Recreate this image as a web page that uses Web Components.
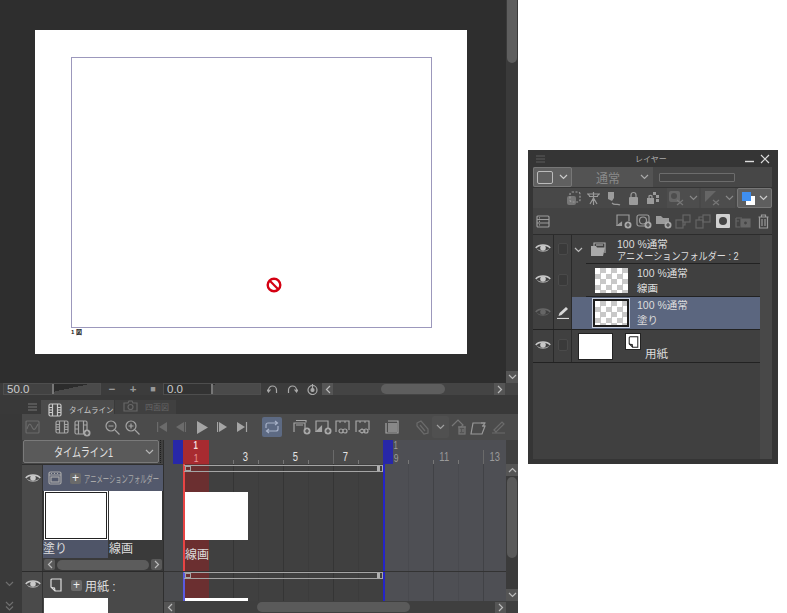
<!DOCTYPE html>
<html lang="ja">
<head>
<meta charset="utf-8">
<title>Timeline</title>
<style>
  html, body { margin: 0; padding: 0; background: #fff; width: 787px; height: 613px; overflow: hidden; }
  body { display: flex; align-items: flex-start; font-family: "Liberation Sans", "Noto Sans CJK JP", sans-serif; }
  app-left { flex: none; }
  layer-panel { flex: none; margin: 150px 0 0 10px; }
</style>
</head>
<body>
<app-left>
  <canvas-view></canvas-view>
  <status-bar></status-bar>
  <timeline-panel></timeline-panel>
</app-left>
<layer-panel></layer-panel>

<script>
const SVG = (w, h, body) => `<svg width="${w}" height="${h}" viewBox="0 0 ${w} ${h}" fill="none" stroke="currentColor" stroke-width="1.2">${body}</svg>`;
const PLUS = (x, y, c) => `<circle cx="${x}" cy="${y}" r="3.5" fill="#a8a8a8" stroke="none"/><path d="M${x-2} ${y}h4M${x} ${y-2}v4" stroke="${c || '#444'}"/>`;

const ICON = {
  burger: SVG(9, 8, '<path d="M0 1h9M0 4h9M0 7h9" stroke-width="1"/>'),
  film: SVG(14, 14, '<rect x="1" y="1" width="12" height="12" rx="1.5"/><path d="M4.5 1v12M9.5 1v12M1 4.500h3.500M1 7h3.500M1 9.500h3.500M9.500 4.500h3.500M9.500 7h3.500M9.500 9.500h3.500"/>'),
  filmAdd: SVG(17, 17, '<rect x="1" y="1" width="12" height="13" rx="1.5"/><path d="M4.500 1v13M9.500 1v13M1 5h3.500M1 9h3.500M9.500 5h3.500"/>' + PLUS(13, 13)),
  animFolder: SVG(14, 14, '<rect x="1" y="1" width="12" height="12" rx="1.500"/><path d="M1 4h12M3 2.500h1M6 2.500h1M9 2.500h1"/><rect x="3" y="6" width="8" height="5"/>'),
  camera: SVG(15, 12, '<path d="M1 11V3h4l1-2h3l1 2h4v8z"/><circle cx="7.500" cy="7" r="2.500"/>'),
  zoomOut: SVG(15, 15, '<circle cx="6" cy="6" r="5"/><path d="M10 10l4.500 4.500M3.500 6h5"/>'),
  zoomIn: SVG(15, 15, '<circle cx="6" cy="6" r="5"/><path d="M10 10l4.500 4.500M3.500 6h5M6 3.500v5"/>'),
  wave: SVG(15, 14, '<rect x="1" y="1" width="13" height="12" rx="1"/><path d="M2 9c2-6 3-6 5-2s3 3 6-3"/>'),
  first: SVG(11, 12, '<path d="M.6 1v10"/><path d="M10 1v10L2 6z" fill="currentColor" stroke="none"/>'),
  prev: SVG(11, 12, '<path d="M9 1v10L1 6z" fill="currentColor" stroke="none"/><path d="M10.500 1v10"/>'),
  play: SVG(11, 13, '<path d="M0 0v13l11-6.500z" fill="currentColor" stroke="none"/>'),
  next: SVG(11, 12, '<path d="M.5 1v10"/><path d="M2 1v10l8-5z" fill="currentColor" stroke="none"/>'),
  last: SVG(11, 12, '<path d="M0 1v10l8-5z" fill="currentColor" stroke="none"/><path d="M9.500 1v10"/>'),
  loop: SVG(16, 14, '<path d="M2 8V5a2 2 0 0 1 2-2h9M11 1l2.500 2L11 5M14 6v3a2 2 0 0 1-2 2H3M5 9l-2.500 2L5 13"/>'),
  undo: SVG(11, 9, '<path d="M1.500 7V5a4 4 0 0 1 8 0v3M0 4.500l1.500 2.500L3.500 4.500"/>'),
  redo: SVG(11, 9, '<path d="M1.500 8V5a4 4 0 0 1 8 0v2M7.500 4.500l2 2.500L11 4.500"/>'),
  clock: SVG(11, 11, '<circle cx="5.500" cy="6" r="4.500"/><path d="M5.500 0v6"/><circle cx="5.500" cy="6" r="1.500" fill="currentColor"/>'),
  eye: SVG(16, 10, '<path d="M.8 5C4 1 12 1 15.200 5" stroke-width="1.600"/><path d="M2.500 6.500C5 8.800 11 8.800 13.500 6.500" stroke-width=".8"/><circle cx="8" cy="5" r="2.800" fill="currentColor" stroke="none"/>'),
  chevron: SVG(9, 6, '<path d="M1 1l3.500 3.500L8 1"/>'),
  dbl: SVG(9, 10, '<path d="M1 1l3.500 3.500L8 1M1 5.500L4.500 9 8 5.500"/>'),
  left: SVG(6, 9, '<path d="M5 1L1.500 4.500 5 8"/>'),
  right: SVG(6, 9, '<path d="M1 1l3.500 3.500L1 8"/>'),
  page: SVG(12, 14, '<path d="M1 9V2a1 1 0 0 1 1-1h9v12H5z"/><path d="M1 9.500l3.500.5.500 3"/>'),
  folderFilm: SVG(17, 15, '<path d="M4 4V1h11v10"/><path d="M1 14V4h5l1 1.500h8L13 14z" fill="currentColor" stroke="none"/><path d="M6 3h7"/>'),
  pen: SVG(14, 13, '<path d="M1 12.500h12"/><path d="M2.500 10l1-3L10 1l2 2-6.500 6z" fill="currentColor" stroke="none"/>'),
};

class CanvasView extends HTMLElement {
  constructor() {
    super();
    this.attachShadow({ mode: 'open' }).innerHTML = `
    <style>
      :host { display: flex; width: 518px; height: 383px; background: #2e2e2e; }
      .stage { flex: none; width: 506px; padding: 30px 0 0 35px; box-sizing: border-box; }
      .paper { width: 432px; height: 324px; background: #fff; padding: 27px 0 0 36px; box-sizing: border-box; display: flex; flex-direction: column; }
      .frame { position: relative; width: 361px; height: 271px; box-sizing: border-box; border: 1px solid #9c98bc; }
      .ban { position: absolute; left: 194px; top: 219px; }
      .num { font: bold 6px/8px "Liberation Sans", "Noto Sans CJK JP", sans-serif; color: #222; }
      .bar { flex: none; width: 12px; background: #3a3a3a; display: flex; flex-direction: column; justify-content: space-between; }
      .thumb { height: 63px; margin: 0 1px; background: #5e5e5e; border-radius: 0 0 5px 5px; }
      .btn { height: 12px; background: #555; color: #bbb; display: flex; align-items: center; justify-content: center; }
    </style>
    <div class="stage">
      <div class="paper">
        <div class="frame">
          <svg class="ban" width="16" height="16" viewBox="0 0 16 16"><circle cx="8" cy="8" r="6.300" fill="#fff" stroke="#d40012" stroke-width="2.400"/><path d="M3.800 3.800l8.400 8.400" stroke="#d40012" stroke-width="2.200"/></svg>
        </div>
        <div class="num">1 図</div>
      </div>
    </div>
    <div class="bar"><div class="thumb"></div><div class="btn">${ICON.chevron}</div></div>`;
  }
}

class StatusBar extends HTMLElement {
  constructor() {
    super();
    this.attachShadow({ mode: 'open' }).innerHTML = `
    <style>
      :host { display: flex; align-items: center; width: 518px; height: 12px; background: #3c3c3c; color: #ccc; font: 11.5px/12px "Liberation Sans", sans-serif; }
      .field { position: relative; height: 12px; box-sizing: border-box; width: 98px; border: 1px solid #4e4e4e; padding-left: 3px; line-height: 10px; overflow: hidden;
        background: linear-gradient(90deg, #424242 48px, #777 48px 50px, transparent 50px), linear-gradient(168deg, #2c2c2c 60%, #4a4a4a 60%); }
      .field.b { background: linear-gradient(90deg, #333 47px, #777 47px 49px, transparent 49px), linear-gradient(165deg, #2c2c2c 40%, #4a4a4a 40%); }
      .sym { color: #999; width: 20px; text-align: center; font-weight: bold; }
      .ctl { color: #aaa; display: flex; width: 20px; justify-content: center; }
      .nav { flex: none; width: 11px; height: 12px; background: #555; color: #bbb; display: flex; align-items: center; justify-content: center; }
      .track { flex: 1; height: 12px; background: #444; display: flex; align-items: center; padding-left: 48px; }
      .track i { display: block; width: 64px; height: 10px; border-radius: 5px; background: #5e5e5e; }
      .end { flex: none; width: 13px; height: 12px; background: #444; }
    </style>
    <div class="field" style="margin-left:3px">50.0</div>
    <span class="sym" style="margin-left:1px">−</span><span class="sym" style="margin-left:1px">+</span>
    <span class="sym" style="font-size:9px">■</span>
    <div class="field b">0.0</div>
    <span class="ctl" style="margin-left:1px">${ICON.undo}</span><span class="ctl">${ICON.redo}</span><span class="ctl">${ICON.clock}</span>
    <div class="nav">${ICON.left}</div>
    <div class="track"><i></i></div>
    <div class="nav">${ICON.right}</div><div class="end"></div>`;
  }
}

class TimelinePanel extends HTMLElement {
  constructor() {
    super();
    const nums = [[3,78],[5,128],[7,178],[11,274],[13,324]];
    this.attachShadow({ mode: 'open' }).innerHTML = `
    <style>
      :host { display: block; width: 518px; height: 218px; background: #383838; color: #ccc; font-family: "Liberation Sans", "Noto Sans CJK JP", sans-serif; overflow: hidden; }
      .tabs { height: 19px; padding: 5px 0 0 28px; box-sizing: border-box; display: flex; align-items: flex-start; background: #393939; }
      .menu { width: 9px; margin: 3px 4px 0 0; color: #777; display: flex; }
      .tab { flex: none; height: 19px; display: flex; align-items: center; gap: 7px; padding-left: 7px; background: #4b4b4b; font-size: 7.500px; color: #c8c8c8; width: 73px; box-sizing: border-box; white-space: nowrap; z-index: 1; }
      .tab svg { flex: none; }
      .tab.off { background: #404040; color: #666; width: 61px; margin-left: 1px; height: 14px; align-items: flex-start; padding-left: 8px; font-size: 8px; }
      .tab.off span { margin-top: 1px; }
      .tool { height: 26px; margin-left: 22px; background: #4b4b4b; display: flex; align-items: center; padding-left: 3px; color: #a5a5a5; }
      .tool > * { flex: none; display: flex; align-items: center; justify-content: center; }
      .dim { color: #6b6b6b; }
      .on { width: 20px; height: 20px; border-radius: 2px; background: #5d6a83; color: #a8b2c8; }
      .body { display: flex; height: 173px; }
      .rail { width: 22px; flex: none; background: #3a3a3a; color: #6f6f6f; display: flex; flex-direction: column; align-items: center; justify-content: flex-end; gap: 14px; padding: 0 4px 2px 0; box-sizing: border-box; }
      .side { width: 141px; flex: none; background: #464646; display: flex; flex-direction: column; }
      .selrow { display: flex; height: 23px; background: #404040; }
      .sel { flex: 1; min-width: 0; margin-left: 1px; border: 1px solid #7a7a7a; border-radius: 2px; background: #5a5a5a; display: flex; align-items: center; font-size: 12px; color: #e2e2e2; padding: 0 4px 0 30px; box-sizing: border-box; justify-content: space-between; white-space: nowrap; }
      .sel span { display: block; transform: scaleX(.76); transform-origin: left; }
      .sel svg { color: #b5b5b5; flex: none; }
      .dots { width: 0; margin: 0 2px 0 1px; border-left: 1px dotted #1f1f1f; }
      .row1 { margin-top: 1px; border-top: 1px solid #2f2f2f; display: flex; height: 106px; border-bottom: 1px solid #2b2b2b; }
      .eye { width: 21px; flex: none; display: flex; justify-content: center; padding: 8px 0 0 1px; color: #c9c9c9; background: #4a4a4a; border-right: 1px solid #333; box-sizing: border-box; }
      .cont { flex: 1; min-width: 0; display: flex; flex-direction: column; background: #3a3a3a; }
      .head { flex: none; height: 26px; background: #53596c; display: flex; align-items: center; padding-left: 5px; color: #a9a9a9; font-size: 10.500px; white-space: nowrap; overflow: hidden; }
      .head > * { flex: none; }
      .plus { flex: none; width: 11px; height: 11px; background: #6a6a6a; border-radius: 2px; color: #eee; font: 12px/10px "Liberation Sans", sans-serif; text-align: center; margin: 0 3px 0 8px; }
      .squeeze { display: inline-block; transform: scaleX(.6); transform-origin: left; }
      .cels { display: flex; gap: 1px; background: #333; flex: none; }
      .cel { width: 53px; height: 49px; background: #fff; box-sizing: border-box; flex: none; }
      .cel.cur { width: 64px; margin-left: 1px; outline: 1px solid #222; outline-offset: -2px; }
      .names { display: flex; height: 18px; flex: none; color: #ddd; font-size: 12px; line-height: 18px; }
      .names span { flex: none; }
      .names .c { width: 65px; background: #4f5568; margin-right: 1px; }
      .sb { flex: 1; display: flex; align-items: center; gap: 2px; padding: 0 1px; }
      .sb b { flex: none; width: 11px; height: 11px; background: #595959; border-radius: 2px; color: #bbb; display: flex; align-items: center; justify-content: center; }
      .sb i { flex: 1; height: 10px; border-radius: 5px; background: #5c5c5c; }
      .row2 { display: flex; flex: 1; min-height: 0; }
      .row2 .eye { padding-top: 7px; }
      .paperrow { flex: 1; display: flex; flex-direction: column; background: #494949; }
      .head2 { height: 26px; flex: none; display: flex; align-items: center; padding-left: 7px; color: #ddd; font-size: 12px; white-space: nowrap; }
      .head2 .plus { margin-left: 9px; }
      .mini { width: 64px; height: 16px; background: #fff; margin-left: 1px; }
      .grip { width: 1px; flex: none; background: #2f2f2f; }
      .tl { position: relative; flex: 1; min-width: 0; background: #404040; overflow: hidden; }
      .before { position: absolute; left: 0; top: 0; width: 19px; bottom: 0; background: #4a4b4e; }
      .after { position: absolute; left: 219px; top: 0; right: 12px; bottom: 0; background: #4e4f54; }
      .ruler { position: absolute; left: 19px; width: 200px; top: 0; height: 24px; background: #4b4b4b; }
      .vline { position: absolute; top: 24px; bottom: 12px; width: 1px; background: rgba(0,0,0,.16); }
      .vline.f { background: rgba(0,0,0,.06); }
      .n { position: absolute; top: 11px; font: 12px/13px "Liberation Sans", sans-serif; color: #e4e4e4; transform: scaleX(.78); }
      .n.g { color: #9a9a9a; }
      .n.lo { top: 12px; font-size: 11px; }
      .n.hi { top: 1px; font-size: 10px; line-height: 10px; }
      .tick { position: absolute; top: 20px; width: 1px; height: 4px; background: #777; }
      .tick.t { top: 10px; height: 14px; background: #6a6a6a; }
      .blue { position: absolute; top: 0; height: 24px; width: 10px; background: #2828a8; }
      .red { position: absolute; left: 19px; width: 26px; top: 0; height: 24px; background: #a82b30; }
      .redb { position: absolute; left: 20px; width: 25px; top: 24px; bottom: 12px; background: #6b2f30; }
      .head-l { position: absolute; left: 19px; top: 24px; bottom: 12px; width: 2px; background: linear-gradient(#e84444 0 107px, #5a5ae0 107px); }
      .loop-l { position: absolute; left: 219px; top: 24px; bottom: 12px; width: 2px; background: #2424c8; }
      .span { position: absolute; left: 20px; width: 199px; height: 7px; box-sizing: border-box; border: 1px solid #a5a5a5; border-width: 1px 1px 1px 0; }
      .span::before, .span::after { content: ""; position: absolute; top: 0; height: 5px; box-sizing: border-box; }
      .span::before { left: 1px; width: 6px; border: 1px solid #a5a5a5; }
      .span::after { right: 2px; width: 3px; background: #b0b0b0; }
      .wcel { position: absolute; left: 20px; top: 52px; width: 64px; height: 48px; background: #fff; }
      .wcel2 { position: absolute; left: 20px; top: 158px; width: 64px; height: 3px; background: #fff; }
      .lbl { position: absolute; left: 21px; top: 108px; font-size: 12px; line-height: 15px; color: #ddd; }
      .hl { position: absolute; left: 0; right: 12px; top: 131px; height: 1px; background: #333; }
      .vs { position: absolute; right: 0; top: 24px; bottom: 12px; width: 12px; background: #3b3b3b; display: flex; flex-direction: column; align-items: center; color: #bbb; }
      .vs b { display: flex; align-items: center; justify-content: center; width: 12px; height: 12px; background: #555; }
      .vs i { display: block; width: 10px; height: 81px; background: #5a5a5a; border-radius: 5px; margin-top: 1px; }
      .vs .sp { flex: 1; }
      .up svg { transform: rotate(180deg); }
      .hs { position: absolute; left: 0; right: 0; bottom: 0; height: 12px; background: #3f3f3f; display: flex; align-items: center; color: #bbb; }
      .hs b { width: 11px; height: 11px; background: #555; display: flex; align-items: center; justify-content: center; }
      .hs i { display: block; width: 153px; height: 10px; background: #5a5a5a; border-radius: 5px; margin-left: 82px; }
      .hs .sp { flex: 1; }
    </style>
    <div class="tabs">
      <span class="menu">${ICON.burger}</span>
      <div class="tab">${ICON.film}<span>タイムライン</span></div>
      <div class="tab off">${ICON.camera}<span>四面図</span></div>
    </div>
    <div class="tool">
      <span class="dim">${ICON.wave}</span>
      <span style="margin-left:15px">${ICON.film}</span>
      <span style="margin-left:5px;margin-top:3px">${ICON.filmAdd}</span>
      <span style="margin-left:14px">${ICON.zoomOut}</span>
      <span style="margin-left:5px">${ICON.zoomIn}</span>
      <span class="dim" style="margin-left:17px">${ICON.first}</span>
      <span class="dim" style="margin-left:7px">${ICON.prev}</span>
      <span style="margin-left:11px">${ICON.play}</span>
      <span style="margin-left:9px">${ICON.next}</span>
      <span style="margin-left:9px">${ICON.last}</span>
      <span class="on" style="margin-left:14px">${ICON.loop}</span>
      <span style="margin-left:11px">${SVG(18, 16, '<path d="M1 13V4h11v7"/><path d="M3 1.500h10v2M3 6h7"/>' + PLUS(14, 12))}</span>
      <span style="margin-left:4px">${SVG(17, 16, '<path d="M1 13V2h12v8"/><path d="M1.500 12.500l5-5v5z" fill="currentColor"/>' + PLUS(13, 12))}</span>
      <span style="margin-left:3px">${SVG(17, 16, '<path d="M1 13V2h13v9"/><path d="M4 3h2M9 3h2"/><path d="M4 12a2 2 0 1 1 4 0a2 2 0 1 1-4 0M8 12a2 2 0 1 1 4 0a2 2 0 1 1-4 0"/>')}</span>
      <span style="margin-left:3px">${SVG(17, 16, '<path d="M1 13V2h13v9"/><path d="M4 3h2M9 3h2"/><path d="M4 12l3-2 3 2-3 2zM9 12a2 2 0 1 1 4 0a2 2 0 1 1-4 0"/>')}</span>
      <span style="margin-left:13px">${SVG(15, 15, '<rect x="3" y="3" width="9" height="9" fill="#888" stroke="none"/><path d="M3 1h8M1 3v8M3 13h8M13 3v8M11 1h2v2M1 11v2h2M11 13h2v-2" /> ')}</span>
      <span class="dim" style="margin-left:15px">${SVG(15, 15, '<path d="M2 3l4-2 7 8v4l-4 1-7-8z"/><path d="M5 5l5 6"/>')}</span>
      <span style="margin-left:2px;width:17px;height:22px;background:#505050;color:#a0a0a0;border-radius:2px">${ICON.chevron}</span>
      <span class="dim" style="margin-left:2px;color:#777">${SVG(16, 16, '<path d="M1 7l6-6 5 5-3 3"/><rect x="8" y="8" width="6" height="7" fill="#555"/><path d="M7 8h8M9 10v3M12 10v3"/>')}</span>
      <span style="margin-left:3px;color:#999">${SVG(16, 15, '<path d="M3 3h12l-2 3h2l-3 8H1z"/><path d="M11 3h4M12 6h3"/>')}</span>
      <span class="dim" style="margin-left:5px">${SVG(15, 14, '<path d="M1 13h13M3 10l8-8 2 2-8 8z"/>')}</span>
    </div>
    <div class="body">
      <div class="rail">${ICON.chevron}${ICON.dbl}</div>
      <div class="side">
        <div class="selrow"><div class="sel"><span>タイムライン1</span>${ICON.chevron}</div><div class="dots"></div></div>
        <div class="row1">
          <div class="eye">${ICON.eye}</div>
          <div class="cont">
            <div class="head">${ICON.animFolder}<span class="plus">+</span><span class="squeeze">アニメーションフォルダー</span></div>
            <div class="cels"><div class="cel cur"></div><div class="cel"></div></div>
            <div class="names"><span class="c">塗り</span><span>線画</span></div>
            <div class="sb"><b>${ICON.left}</b><i></i><b>${ICON.right}</b></div>
          </div>
        </div>
        <div class="row2">
          <div class="eye">${ICON.eye}</div>
          <div class="paperrow">
            <div class="head2">${ICON.page}<span class="plus">+</span><span>用紙 :</span></div>
            <div class="mini"></div>
          </div>
        </div>
      </div>
      <div class="grip"></div>
      <div class="tl">
        <div class="before"></div>
        <div class="ruler"></div>
        <div class="after"></div>
        ${[69,119,169,269,319].map(x => `<div class="vline" style="left:${x}px"></div>`).join('')}
        ${[44,94,144,194,244,294].map(x => `<div class="vline f" style="left:${x}px"></div>`).join('')}
        ${[44,69,94,119,144,169,194,244,269,294,319].map(x => `<div class="tick ${x === 169 || x === 319 ? 't' : ''}" style="left:${x}px"></div>`).join('')}
        <div class="blue" style="left:9px"></div>
        <div class="red"></div>
        <div class="redb"></div>
        <div class="blue" style="left:219px"></div>
        <div class="n hi" style="left:29px;font-weight:bold;color:#f2dede">1</div>
        <div class="n lo" style="left:29px;color:#e89a9a">1</div>
        ${nums.map(([v, x]) => `<div class="n ${v >= 9 ? 'g' : ''}" style="left:${x}px">${v}</div>`).join('')}
        <div class="n g hi" style="left:229px">1</div>
        <div class="n g lo" style="left:229px">9</div>
        <div class="wcel"></div><div class="wcel2"></div>
        <div class="head-l"></div><div class="loop-l"></div>
        <div class="span" style="top:25px"></div>
        <div class="span" style="top:132px"></div>
        <div class="lbl">線画</div>
        <div class="hl"></div>
        <div class="vs"><b class="up">${ICON.chevron}</b><i></i><span class="sp"></span><b>${ICON.chevron}</b></div>
        <div class="hs"><b>${ICON.left}</b><i></i><span class="sp"></span><b>${ICON.right}</b><span style="width:12px"></span></div>
      </div>
    </div>`;
  }
}

class LayerRow extends HTMLElement {
  constructor() {
    super();
    this.attachShadow({ mode: 'open' }).innerHTML = `
    <style>
      :host { display: flex; height: 33px; box-sizing: border-box; border-bottom: 1px solid #222; color: #ddd; width: 227px; }
      :host([short]) { border-bottom: 0; }
      .e { width: 21px; flex: none; display: flex; align-items: center; justify-content: center; color: #c8c8c8; border-right: 1px solid #2a2a2a; box-sizing: border-box; padding-bottom: 3px; }
      .k { width: 18px; flex: none; display: flex; align-items: center; justify-content: center; border-right: 1px solid #2a2a2a; box-sizing: border-box; color: #ccc; padding-bottom: 2px; }
      .k i { display: block; width: 10px; height: 12px; box-sizing: border-box; border: 1px solid #4a4a4a; background: #3a3a3a; border-radius: 2px; }
      .main { flex: 1; min-width: 0; display: flex; align-items: center; font-size: 10.500px; line-height: 14px; }
      :host([short]) .main { background: linear-gradient(#222, #222) right bottom / 174px 1px no-repeat; }
      :host([selected]) .main { background: #5b667f; }
      :host([dimeye]) .e { color: #666; }
    </style>
    <div class="e">${ICON.eye}</div>
    <div class="k"><slot name="k"><i></i></slot></div>
    <div class="main"><slot></slot></div>`;
  }
}

class LayerPanel extends HTMLElement {
  constructor() {
    super();
    const checker = 'background: repeating-conic-gradient(#c8c8c8 0 25%, #fff 0 50%) 0 0/11px 11px;';
    this.attachShadow({ mode: 'open' }).innerHTML = `
    <style>
      :host { display: flex; flex-direction: column; width: 250px; height: 314px; box-sizing: border-box; padding: 0 6px 5px 5px; background: #353535; font-family: "Liberation Sans", "Noto Sans CJK JP", sans-serif; color: #ccc; overflow: hidden; }
      .title { height: 17px; flex: none; display: flex; align-items: center; padding: 0 2px 0 3px; color: #5d5d5d; }
      .title .t { flex: 1; text-align: center; font-size: 8px; color: #aaa; padding-left: 12px; }
      .title .c { color: #ddd; display: flex; }
      .blend { height: 20px; flex: none; background: linear-gradient(90deg, #535353 120px, #474747 120px); display: flex; align-items: center; }
      .swatch { width: 39px; height: 20px; background: #606060; border: 1px solid #777; border-radius: 2px; display: flex; align-items: center; box-sizing: border-box; padding-left: 3px; gap: 6px; color: #ccc; }
      .swatch i { width: 16px; height: 13px; box-sizing: border-box; border: 1px solid #bbb; border-radius: 2px; }
      .mode { margin-left: 24px; font-size: 12px; color: #8a8a8a; width: 44px; }
      .blend > svg { color: #aaa; }
      .op { margin-left: 10px; width: 76px; height: 9px; box-sizing: border-box; border: 1px solid #6c6c6c; background: #444; border-radius: 1px; }
      .t1, .t2 { display: flex; align-items: center; flex: none; color: #9b9b9b; background: #484848; }
      .t1 { height: 20px; margin-top: 1px; }
      .t2 { height: 27px; background: #434343; border-bottom: 1px solid #2c2c2c; box-sizing: border-box; }
      .t1 > *, .t2 > * { flex: none; display: flex; align-items: center; }
      .dim { color: #666; }
      .list { display: flex; flex: 1; min-height: 0; background: #404040; }
      .rows { width: 227px; flex: none; }
      .sbar { flex: 1; background: #484848; }
      .two { white-space: nowrap; }
      .two div { transform-origin: left; }
      .thumb { flex: none; box-sizing: border-box; ${checker} }
      .w { background: #fff; width: 33px; height: 25px; flex: none; box-shadow: 0 0 0 1px #222; }
      .pg { flex: none; width: 16px; height: 17px; background: #fff; color: #222; display: flex; align-items: center; justify-content: center; border: 1px solid #222; box-sizing: border-box; }
      .pg svg { width: 11px; height: 12px; }
    </style>
    <div class="title">
      <span style="display:flex">${ICON.burger}</span><span class="t">レイヤー</span>
      <span class="c" style="margin-top:6px">${SVG(9, 3, '<path d="M0 1.500h9" stroke-width="1.400"/>')}</span>
      <span class="c" style="margin-left:6px">${SVG(10, 10, '<path d="M1 1l8 8M9 1l-8 8"/>')}</span>
    </div>
    <div class="blend">
      <div class="swatch"><i></i>${ICON.chevron}</div>
      <span class="mode">通常</span>${ICON.chevron}
      <div class="op"></div>
    </div>
    <div class="t1">
      <span style="margin-left:33px">${SVG(15, 15, '<rect x="1" y="5" width="9" height="9" rx="2" fill="#777" stroke="none"/><rect x="4" y="1" width="10" height="10" rx="2" stroke-dasharray="2 1.500"/>')}</span>
      <span style="margin-left:5px">${SVG(15, 14, '<path d="M1 3h13M3 5.500h9M7.500 1v13M4 13l3.500-6 3.500 6M2 3l2 2.500M13 3l-2 2.500"/>')}</span>
      <span style="margin-left:6px">${SVG(14, 15, '<path d="M1 1h6v6l-2 3-4-2z" fill="currentColor" stroke="none"/><path d="M5 12c3 3 5 0 8 2"/>')}</span>
      <span style="margin-left:7px">${SVG(11, 14, '<rect x="1" y="6" width="9" height="8" rx="1" fill="currentColor" stroke="none"/><path d="M3 6V4a2.500 2.500 0 0 1 5 0v2"/>')}</span>
      <span style="margin-left:7px">${SVG(14, 14, '<rect x="1" y="7" width="7" height="6" fill="currentColor" stroke="none"/><path d="M3 7V5a2 2 0 0 1 3 0v2"/><path d="M7 1h3v3H7zM10 4h3v3h-3zM10 8h3v3h-3z" fill="currentColor" stroke="none"/>')}</span>
      <span class="dim" style="margin-left:7px;width:32px;height:20px;background:#4d4d4d;padding-left:1px;box-sizing:border-box">${SVG(18, 16, '<rect x="1" y="1" width="11" height="11" rx="2" fill="#666" stroke="none"/><circle cx="6" cy="6" r="3" fill="#4d4d4d" stroke="none"/><path d="M9 10l6 5M15 10l-6 5" stroke="#777"/>')}<span style="margin-left:3px;color:#888;display:flex">${ICON.chevron}</span></span>
      <span class="dim" style="margin-left:2px;width:34px;height:20px;background:#4d4d4d;padding-left:3px;box-sizing:border-box">${SVG(18, 16, '<path d="M1 1h11L1 12z" fill="#666" stroke="none"/><path d="M9 10l6 5M15 10l-6 5" stroke="#777"/>')}<span style="margin-left:3px;color:#888;display:flex">${ICON.chevron}</span></span>
      <span style="margin-left:2px;width:35px;height:20px;background:#5e5e5e;border:1px solid #777;border-radius:2px;box-sizing:border-box;padding-left:3px;color:#ccc">${SVG(15, 15, '<rect x="5" y="5" width="9" height="9" fill="#fff" stroke="none"/><rect x="1" y="1" width="9" height="9" fill="#3f8ff0" stroke="none"/>')}<span style="margin-left:3px;display:flex">${ICON.chevron}</span></span>
    </div>
    <div class="t2">
      <span style="margin-left:3px">${SVG(14, 13, '<rect x="1" y="1" width="12" height="11" rx="1"/><path d="M1 4.500h12M1 8h12M3 2.800h1M3 6.300h1M3 9.800h1"/>')}</span>
      <span style="margin-left:66px">${SVG(16, 15, '<path d="M1 12V1h12v6"/><path d="M1.500 11.500l4-3v3z" fill="currentColor"/>' + PLUS(12, 11))}</span>
      <span style="margin-left:4px">${SVG(16, 15, '<rect x="1" y="1" width="12" height="11" rx="2"/><circle cx="7" cy="6.500" r="3.500"/>' + PLUS(12, 11))}</span>
      <span style="margin-left:3px">${SVG(17, 15, '<path d="M1 12V2h5l2 2h6v6H1z" fill="currentColor" stroke="none"/>' + PLUS(13, 11))}</span>
      <span class="dim" style="margin-left:3px">${SVG(16, 15, '<rect x="8" y="1" width="7" height="7"/><rect x="1" y="6" width="7" height="8"/><path d="M10 8v3H8"/>')}</span>
      <span class="dim" style="margin-left:4px">${SVG(16, 15, '<rect x="8" y="1" width="7" height="7"/><rect x="1" y="6" width="7" height="8"/><path d="M4 6V3h4"/>')}</span>
      <span style="margin-left:5px;color:#d0d0d0">${SVG(14, 14, '<rect x="0" y="0" width="14" height="14" rx="1" fill="currentColor" stroke="none"/><circle cx="7" cy="7" r="4" fill="#444" stroke="none"/>')}</span>
      <span class="dim" style="margin-left:5px">${SVG(16, 13, '<path d="M1 3h6M1 3v9h4M1 6h3"/><path d="M6 12V4h9v8z" fill="#666"/><circle cx="10.500" cy="8" r="2" fill="#444"/>')}</span>
      <span style="margin-left:7px">${SVG(11, 15, '<path d="M.5 3h10M3.500 3V1h4v2M1.500 3v11h8V3M4 5v7M7 5v7"/>')}</span>
    </div>
    <div class="list">
      <div class="rows">
        <layer-row short style="height:29px">
          ${ICON.chevron.replace('<svg', '<svg style="margin:0 7px 0 2px;color:#bbb;flex:none"')}
          <span style="color:#aaa;display:flex;margin-right:10px">${ICON.folderFilm}</span>
          <div class="two" style="line-height:12px"><div>100 %通常</div><div style="transform:scaleX(.87)">アニメーションフォルダー : 2</div></div>
        </layer-row>
        <layer-row short>
          <div class="thumb" style="margin:0 9px 0 23px;width:33px;height:25px"></div>
          <div class="two" style="line-height:15px"><div>100 %通常</div><div>線画</div></div>
        </layer-row>
        <layer-row selected dimeye>
          <span slot="k" style="display:flex;color:#d8d8d8">${ICON.pen}</span>
          <div class="thumb" style="margin:0 8px 0 21px;width:36px;height:28px;border:2px solid #1c1c1c;box-shadow:0 0 0 1px #c8d0e0"></div>
          <div class="two" style="line-height:15px"><div>100 %通常</div><div>塗り</div></div>
        </layer-row>
        <layer-row>
          <div class="w" style="margin:0 13px 0 7px"></div>
          <div class="pg" style="margin:-9px 4px 0 0">${ICON.page}</div>
          <span style="margin-top:15px;font-size:11.500px">用紙</span>
        </layer-row>
      </div>
      <div class="sbar"></div>
    </div>`;
  }
}

customElements.define('canvas-view', CanvasView);
customElements.define('status-bar', StatusBar);
customElements.define('timeline-panel', TimelinePanel);
customElements.define('layer-row', LayerRow);
customElements.define('layer-panel', LayerPanel);
customElements.define('app-left', class extends HTMLElement {
  constructor() {
    super();
    this.attachShadow({ mode: 'open' }).innerHTML = `<style>:host { display: flex; flex-direction: column; width: 518px; height: 613px; overflow: hidden; }</style><slot></slot>`;
  }
});
</script>
</body>
</html>
